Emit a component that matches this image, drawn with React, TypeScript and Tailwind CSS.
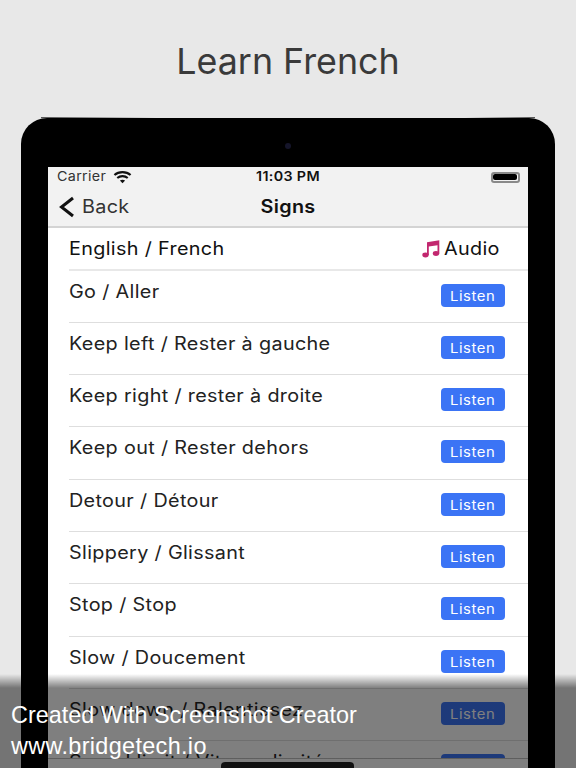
import React from "react";

const rows = [
  "Go / Aller",
  "Keep left / Rester à gauche",
  "Keep right / rester à droite",
  "Keep out / Rester dehors",
  "Detour / Détour",
  "Slippery / Glissant",
  "Stop / Stop",
  "Slow / Doucement",
  "Slow down / Ralentissez",
  "Speed limit / Vitesse limitée",
];

function Wifi() {
  return (
    <svg width="19" height="14" viewBox="0 0 20 14" fill="none" stroke="#111" strokeWidth="2.2">
      <path d="M1.5 5 C6 0.8 14 0.8 18.500 5" />
      <path d="M4.500 8 C7.500 5.400 12.500 5.400 15.500 8" />
      <path d="M10 13.500 L7.300 10.700 C8.800 9.500 11.200 9.500 12.700 10.700 Z" fill="#111" stroke="none" />
    </svg>
  );
}

function Note() {
  return (
    <svg width="18" height="18" viewBox="0 0 18 18" fill="#c2276f">
      <path d="M5 2.200 L17.300 0.200 V13.500 H15.500 V5.200 L6.800 6.600 V15 H5 Z" />
      <ellipse cx="3.500" cy="15" rx="3.200" ry="2.400" />
      <ellipse cx="14" cy="13.500" rx="3.200" ry="2.400" />
    </svg>
  );
}

export default function App() {
  return (
    <div className="relative h-[768px] w-[576px] overflow-hidden bg-[#e8e8e8] font-['Inter',sans-serif]">
      <h1 className="h-[118px] pt-[37px] text-center text-[35.800px] leading-[48px] font-normal text-[#3a3a3a]">
        Learn French
      </h1>
      <div className="relative mx-[21px] h-[700px] rounded-t-[26px] bg-black px-[27px] pt-[49px]">
        <div className="absolute top-[-1px] left-[20px] h-[1px] w-[115px] bg-gradient-to-r from-[#555555] to-[#e8e8e8]" />
        <div className="absolute top-[-1px] right-[20px] h-[1px] w-[70px] bg-gradient-to-l from-[#555555] to-[#e8e8e8]" />
        <div className="flex h-[650px] flex-col bg-white text-[#111]">
          <div className="h-[61px] shrink-0 border-b-2 border-[#d4d4d4] bg-[#f2f2f2]">
            <div className="flex h-[20px] items-center justify-between pr-[8px] pl-[9px]">
              <div className="flex w-[100px] items-center gap-[11px] text-[13px] text-[#333]">
                <span className="origin-left scale-x-[1.1] tracking-[0.3px]">Carrier</span> <Wifi />
              </div>
              <div className="scale-x-[1.1] text-[13px] font-semibold tracking-[0.3px] whitespace-nowrap">11:03 PM</div>
              <div className="flex w-[100px] justify-end">
                <div className="flex h-[11px] w-[29px] items-center rounded-[3px] border-2 border-[#8a8a8a] p-[0.5px]">
                  <div className="h-full w-full rounded-[2px] bg-black" />
                </div>
              </div>
            </div>
            <div className="relative flex h-[39px] items-center pl-[10px]">
              <svg width="18" height="22" viewBox="0 0 18 22" fill="none" stroke="#111" strokeWidth="3">
                <path d="M15 2 L3.500 11 L15 20" />
              </svg>
              <span className="ml-[6px] origin-left scale-x-[1.1] text-[18px] tracking-[0.3px] text-[#333]">Back</span>
              <span className="absolute inset-x-0 top-[6px] scale-x-[1.1] text-center text-[18px] font-semibold tracking-[0.3px]">Signs</span>
            </div>
          </div>
          <div className="h-[530px] shrink-0 overflow-hidden">
            <div className="ml-[21px] flex h-[42.500px] items-center justify-between border-b-2 border-[#e8e8e8] pt-[1px] pr-[28px] text-[18px]">
              <span className="origin-left scale-x-[1.1] tracking-[0.3px]">English / French</span>
              <span className="flex items-center gap-[9px]">
                <Note />
                <span className="origin-right scale-x-[1.1] tracking-[0.3px]">Audio</span>
              </span>
            </div>
            {rows.map((r) => (
              <div
                key={r}
                className="ml-[21px] flex h-[52.300px] justify-between border-b border-[#dedede] pr-[23px]"
              >
                <span className="origin-left scale-x-[1.1] pt-[8px] text-[18px] leading-[26px] tracking-[0.3px] whitespace-nowrap text-[#222]">{r}</span>
                <button className="mt-[13px] h-[23px] w-[64px] shrink-0 rounded-[4px] bg-[#3b74f5] leading-[23px] text-white">
                  <span className="inline-block scale-x-[1.1] text-[13.500px] tracking-[0.5px]">Listen</span>
                </button>
              </div>
            ))}
          </div>
          <div className="flex-1 border-t border-[#bdbdbd] bg-white" />
        </div>
      </div>
      <div className="absolute inset-x-0 bottom-0 h-[94px] bg-gradient-to-b from-[#00000000] to-[#00000080] to-[14px]">
        <div className="h-[14px]" />
        <div className="pt-[12px] pl-[11px] text-[23.400px] leading-[31px] text-white font-['Liberation_Sans',sans-serif]">
          <div>Created With Screenshot Creator</div>
          <div className="tracking-[0.35px]">www.bridgetech.io</div>
        </div>
      </div>
      <div className="absolute top-[143px] left-[285px] size-[6px] rounded-full bg-[#15152a]" />
      <div className="absolute top-[762px] left-[221px] h-[10px] w-[133px] rounded-t-[4px] bg-[#111]" />
    </div>
  );
}
